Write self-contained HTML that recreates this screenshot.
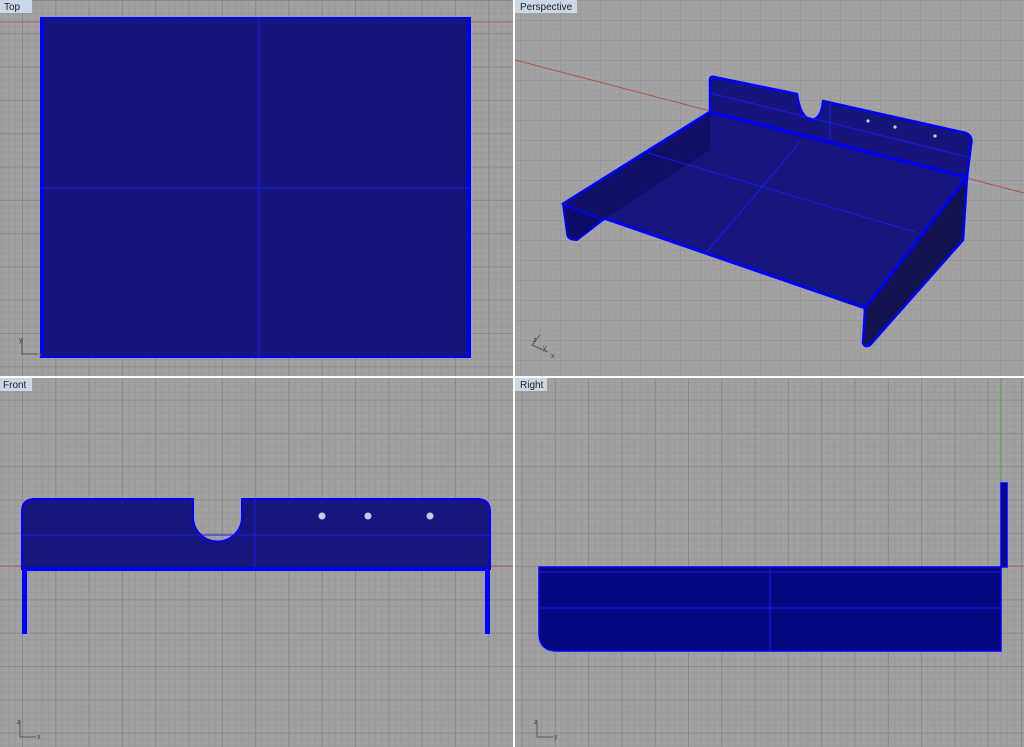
<!DOCTYPE html>
<html><head><meta charset="utf-8"><style>
html,body{margin:0;padding:0;background:#fff;width:1024px;height:747px;overflow:hidden}
svg{display:block}
text{font-family:"Liberation Sans",sans-serif}
</style></head><body>
<svg width="1024" height="747" viewBox="0 0 1024 747" xmlns="http://www.w3.org/2000/svg">
<defs>
<pattern id="g1" x="22" y="0" width="33.3" height="33.3" patternUnits="userSpaceOnUse">
<rect width="33.3" height="33.3" fill="#a1a1a1"/>
<path d="M6.66 0V33.3M13.32 0V33.3M19.98 0V33.3M26.64 0V33.3M0 6.66H33.3M0 13.32H33.3M0 19.98H33.3M0 26.64H33.3" stroke="#999" stroke-width="1"/>
<path d="M0.5 0V33.3M0 0.5H33.3" stroke="#8a8a8a" stroke-width="1"/>
</pattern>
<pattern id="g2" x="0" y="0" width="20" height="20" patternUnits="userSpaceOnUse">
<rect width="20" height="20" fill="#a3a3a3"/>
<path d="M5 0V20M10 0V20M15 0V20M0 5H20M0 10H20M0 15H20" stroke="#9d9d9d" stroke-width="1"/>
<path d="M0.5 0V20M0 0.5H20" stroke="#979797" stroke-width="1"/>
</pattern>
<clipPath id="c1"><rect x="0" y="0" width="513" height="376"/></clipPath>
<clipPath id="c2"><rect x="515" y="0" width="509" height="376"/></clipPath>
<clipPath id="c3"><rect x="0" y="378" width="513" height="369"/></clipPath>
<clipPath id="c4"><rect x="515" y="378" width="509" height="369"/></clipPath>
</defs>
<rect width="1024" height="747" fill="#fff"/>
<!-- TOP -->
<g clip-path="url(#c1)">
<rect x="0" y="0" width="513" height="376" fill="url(#g1)"/>
<line x1="0" y1="22" x2="513" y2="22" stroke="#b06060" stroke-width="1"/>
<rect x="41" y="18" width="429" height="339" fill="#15157c" stroke="#0000ff" stroke-width="2"/>
<rect x="41" y="18" width="3" height="339" fill="#0000ff"/>
<rect x="467" y="18" width="3" height="339" fill="#0000ff"/>
<line x1="41" y1="188" x2="470" y2="188" stroke="#1a1af0" stroke-width="1"/>
<line x1="259" y1="18" x2="259" y2="357" stroke="#1a1af0" stroke-width="1"/>
<path d="M22 338V354H38" stroke="#555" fill="none" stroke-width="1"/>
<text x="19" y="342" font-size="7" fill="#444">y</text><text x="39" y="357" font-size="7" fill="#444">x</text>
<rect x="0" y="0" width="32" height="13" fill="#c9d7e6"/>
<text x="4" y="10" font-size="10" fill="#222">Top</text>
</g>
<!-- PERSPECTIVE -->
<g clip-path="url(#c2)">
<rect x="515" y="0" width="509" height="376" fill="url(#g2)"/>
<line x1="515" y1="60" x2="1024" y2="193" stroke="#b05050" stroke-width="1"/>
<path d="M710 80Q710 76 714 77L797 94Q800 118 812 120Q822 118 823 101L966 133Q973 136 971 145L967 177L710 112Z" fill="#15157c" stroke="#0000ff" stroke-width="2.5" stroke-linejoin="round"/>
<line x1="710" y1="93" x2="967" y2="157" stroke="#1a1af0"/>
<line x1="830" y1="103" x2="830" y2="140" stroke="#1a1af0"/>
<circle cx="868" cy="121" r="1.6" fill="#ccd"/><circle cx="895" cy="127" r="1.6" fill="#ccd"/><circle cx="935" cy="136" r="1.6" fill="#ccd"/>
<path d="M563 204L710 112L710 150L603 220L577 240Q567 240 567 233Z" fill="#0c0c66" stroke="#0000ff" stroke-width="2" stroke-linejoin="round"/>
<path d="M967 177L865 308L863 343Q865 348 870 345L963 240Z" fill="#12124f" stroke="#0000ff" stroke-width="2.5" stroke-linejoin="round"/>
<path d="M563 204L710 112L967 177L865 308Z" fill="#16167e" stroke="#0000ff" stroke-width="3" stroke-linejoin="round"/>
<path d="M565 204L710 114L710 150L603 220Z" fill="#0f0f66"/>
<line x1="648" y1="153" x2="915" y2="232" stroke="#1a1af0"/>
<line x1="800" y1="142" x2="706" y2="253" stroke="#1a1af0"/>
<line x1="563" y1="204" x2="603" y2="220" stroke="#0000ff" stroke-width="2"/>
<path d="M540 335L532 345L548 352" stroke="#555" fill="none"/>
<text x="533" y="342" font-size="7" fill="#444">z</text><text x="543" y="350" font-size="7" fill="#444">y</text><text x="551" y="358" font-size="7" fill="#444">x</text>
<rect x="515" y="0" width="62" height="13" fill="#c9d7e6"/>
<text x="520" y="10" font-size="10" fill="#222">Perspective</text>
</g>
<!-- FRONT -->
<g clip-path="url(#c3)">
<rect x="0" y="378" width="513" height="369" fill="url(#g1)"/>
<line x1="0" y1="566" x2="513" y2="566" stroke="#b06060" stroke-width="1"/>
<path d="M22 569V512Q22 499 35 499H193V517A24.5 24.5 0 0 0 242 517V499H477Q490 499 490 512V569Z" fill="#16167c" stroke="#0000ff" stroke-width="2"/>
<rect x="22" y="567" width="468" height="4" fill="#0000ff"/>
<rect x="22" y="569" width="5" height="65" fill="#0000ff"/>
<rect x="485" y="569" width="5" height="65" fill="#0000ff"/>
<line x1="22" y1="535" x2="490" y2="535" stroke="#1a1af0"/>
<line x1="255" y1="499" x2="255" y2="567" stroke="#1a1af0"/>
<circle cx="322" cy="516" r="3.5" fill="#c8c8e8"/><circle cx="368" cy="516" r="3.5" fill="#c8c8e8"/><circle cx="430" cy="516" r="3.5" fill="#c8c8e8"/>
<path d="M20 721V737H36" stroke="#555" fill="none"/>
<text x="17" y="724" font-size="7" fill="#444">z</text><text x="37" y="739" font-size="7" fill="#444">x</text>
<rect x="0" y="378" width="32" height="13" fill="#c9d7e6"/>
<text x="3" y="388" font-size="10" fill="#222">Front</text>
</g>
<!-- RIGHT -->
<g clip-path="url(#c4)">
<rect x="515" y="378" width="509" height="369" fill="url(#g1)"/>
<line x1="1001" y1="378" x2="1001" y2="567" stroke="#50a050" stroke-width="1"/>
<line x1="1001" y1="566" x2="1024" y2="566" stroke="#b06060" stroke-width="1"/>
<path d="M539 567H1001V651H557Q539 651 539 633Z" fill="#060680" stroke="#0000ff" stroke-width="1.5"/>
<rect x="1001" y="483" width="6" height="84" fill="#0a0a90" stroke="#0000ff" stroke-width="1.5"/>
<line x1="539" y1="572" x2="1001" y2="572" stroke="#1a1af0"/>
<line x1="539" y1="608" x2="1001" y2="608" stroke="#1a1af0"/>
<line x1="770" y1="567" x2="770" y2="651" stroke="#1a1af0"/>
<path d="M537 721V737H553" stroke="#555" fill="none"/>
<text x="534" y="724" font-size="7" fill="#444">z</text><text x="554" y="739" font-size="7" fill="#444">y</text>
<rect x="515" y="378" width="32" height="13" fill="#c9d7e6"/>
<text x="520" y="388" font-size="10" fill="#222">Right</text>
</g>
</svg>
</body></html>
